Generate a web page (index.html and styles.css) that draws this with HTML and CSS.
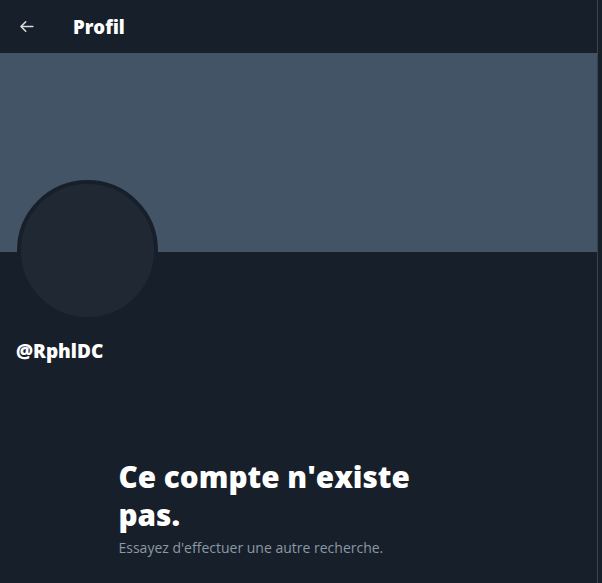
FILE: index.html
```html
<!DOCTYPE html>
<html lang="fr">
<head>
<meta charset="utf-8">
<title>Profil</title>
<link rel="stylesheet" href="styles.css">
</head>
<body>
<main class="column">
  <header class="topbar">
    <button class="back" aria-label="Retour">
      <svg viewBox="0 0 24 24" width="19" height="19"><path d="M20 11H7.414l4.293-4.293a1 1 0 0 0-1.414-1.414l-6 6a1 1 0 0 0 0 1.414l6 6a1 1 0 0 0 1.414-1.414L7.414 13H20a1 1 0 1 0 0-2z" fill="#d9d9d9"/></svg>
    </button>
    <h1 class="title">Profil</h1>
  </header>
  <div class="banner"></div>
  <section class="profile">
    <div class="avatar"></div>
    <div class="handle">@RphlDC</div>
  </section>
  <section class="empty">
    <h2 class="empty-title">Ce compte n'existe pas.</h2>
    <p class="empty-text">Essayez d'effectuer une autre recherche.</p>
  </section>
</main>
</body>
</html>
```

FILE: styles.css
```css
html, body {
  margin: 0;
  padding: 0;
  background: #17202a;
  height: 100%;
}
body {
  font-family: "Open Sans", "Noto Sans", "Liberation Sans", sans-serif;
  color: #ffffff;
}
.column {
  width: 597px;
  min-height: 583px;
  border-right: 1px solid #38444d;
  box-sizing: content-box;
}
.topbar {
  height: 53px;
  display: flex;
  align-items: center;
  padding: 0 16px;
  box-sizing: border-box;
}
.back {
  width: 20px;
  height: 22px;
  padding: 0;
  margin: 0 37px 0 0;
  background: none;
  border: 0;
  display: flex;
  align-items: center;
  justify-content: center;
}
.title {
  margin: 0;
  font-size: 18.5px;
  font-weight: 800;
  line-height: 24px;
  color: #ffffff;
}
.banner {
  height: 199px;
  background: #435466;
}
.profile {
  padding: 0 16px;
}
.avatar {
  width: 133px;
  height: 133px;
  margin-top: -72px;
  margin-left: 1px;
  border-radius: 50%;
  background: #202833;
  border: 4px solid #17202a;
}
.handle {
  margin-top: 18px;
  font-size: 19px;
  font-weight: 800;
  line-height: 24px;
}
.empty {
  max-width: 360px;
  margin: 95px auto 0;
  padding: 0 20px;
}
.empty-title {
  margin: 0;
  font-size: 29.7px;
  font-weight: 800;
  line-height: 38px;
  letter-spacing: 0;
}
.empty-text {
  margin: 4px 0 0;
  font-size: 14px;
  line-height: 20px;
  color: #8b98a5;
}
```
